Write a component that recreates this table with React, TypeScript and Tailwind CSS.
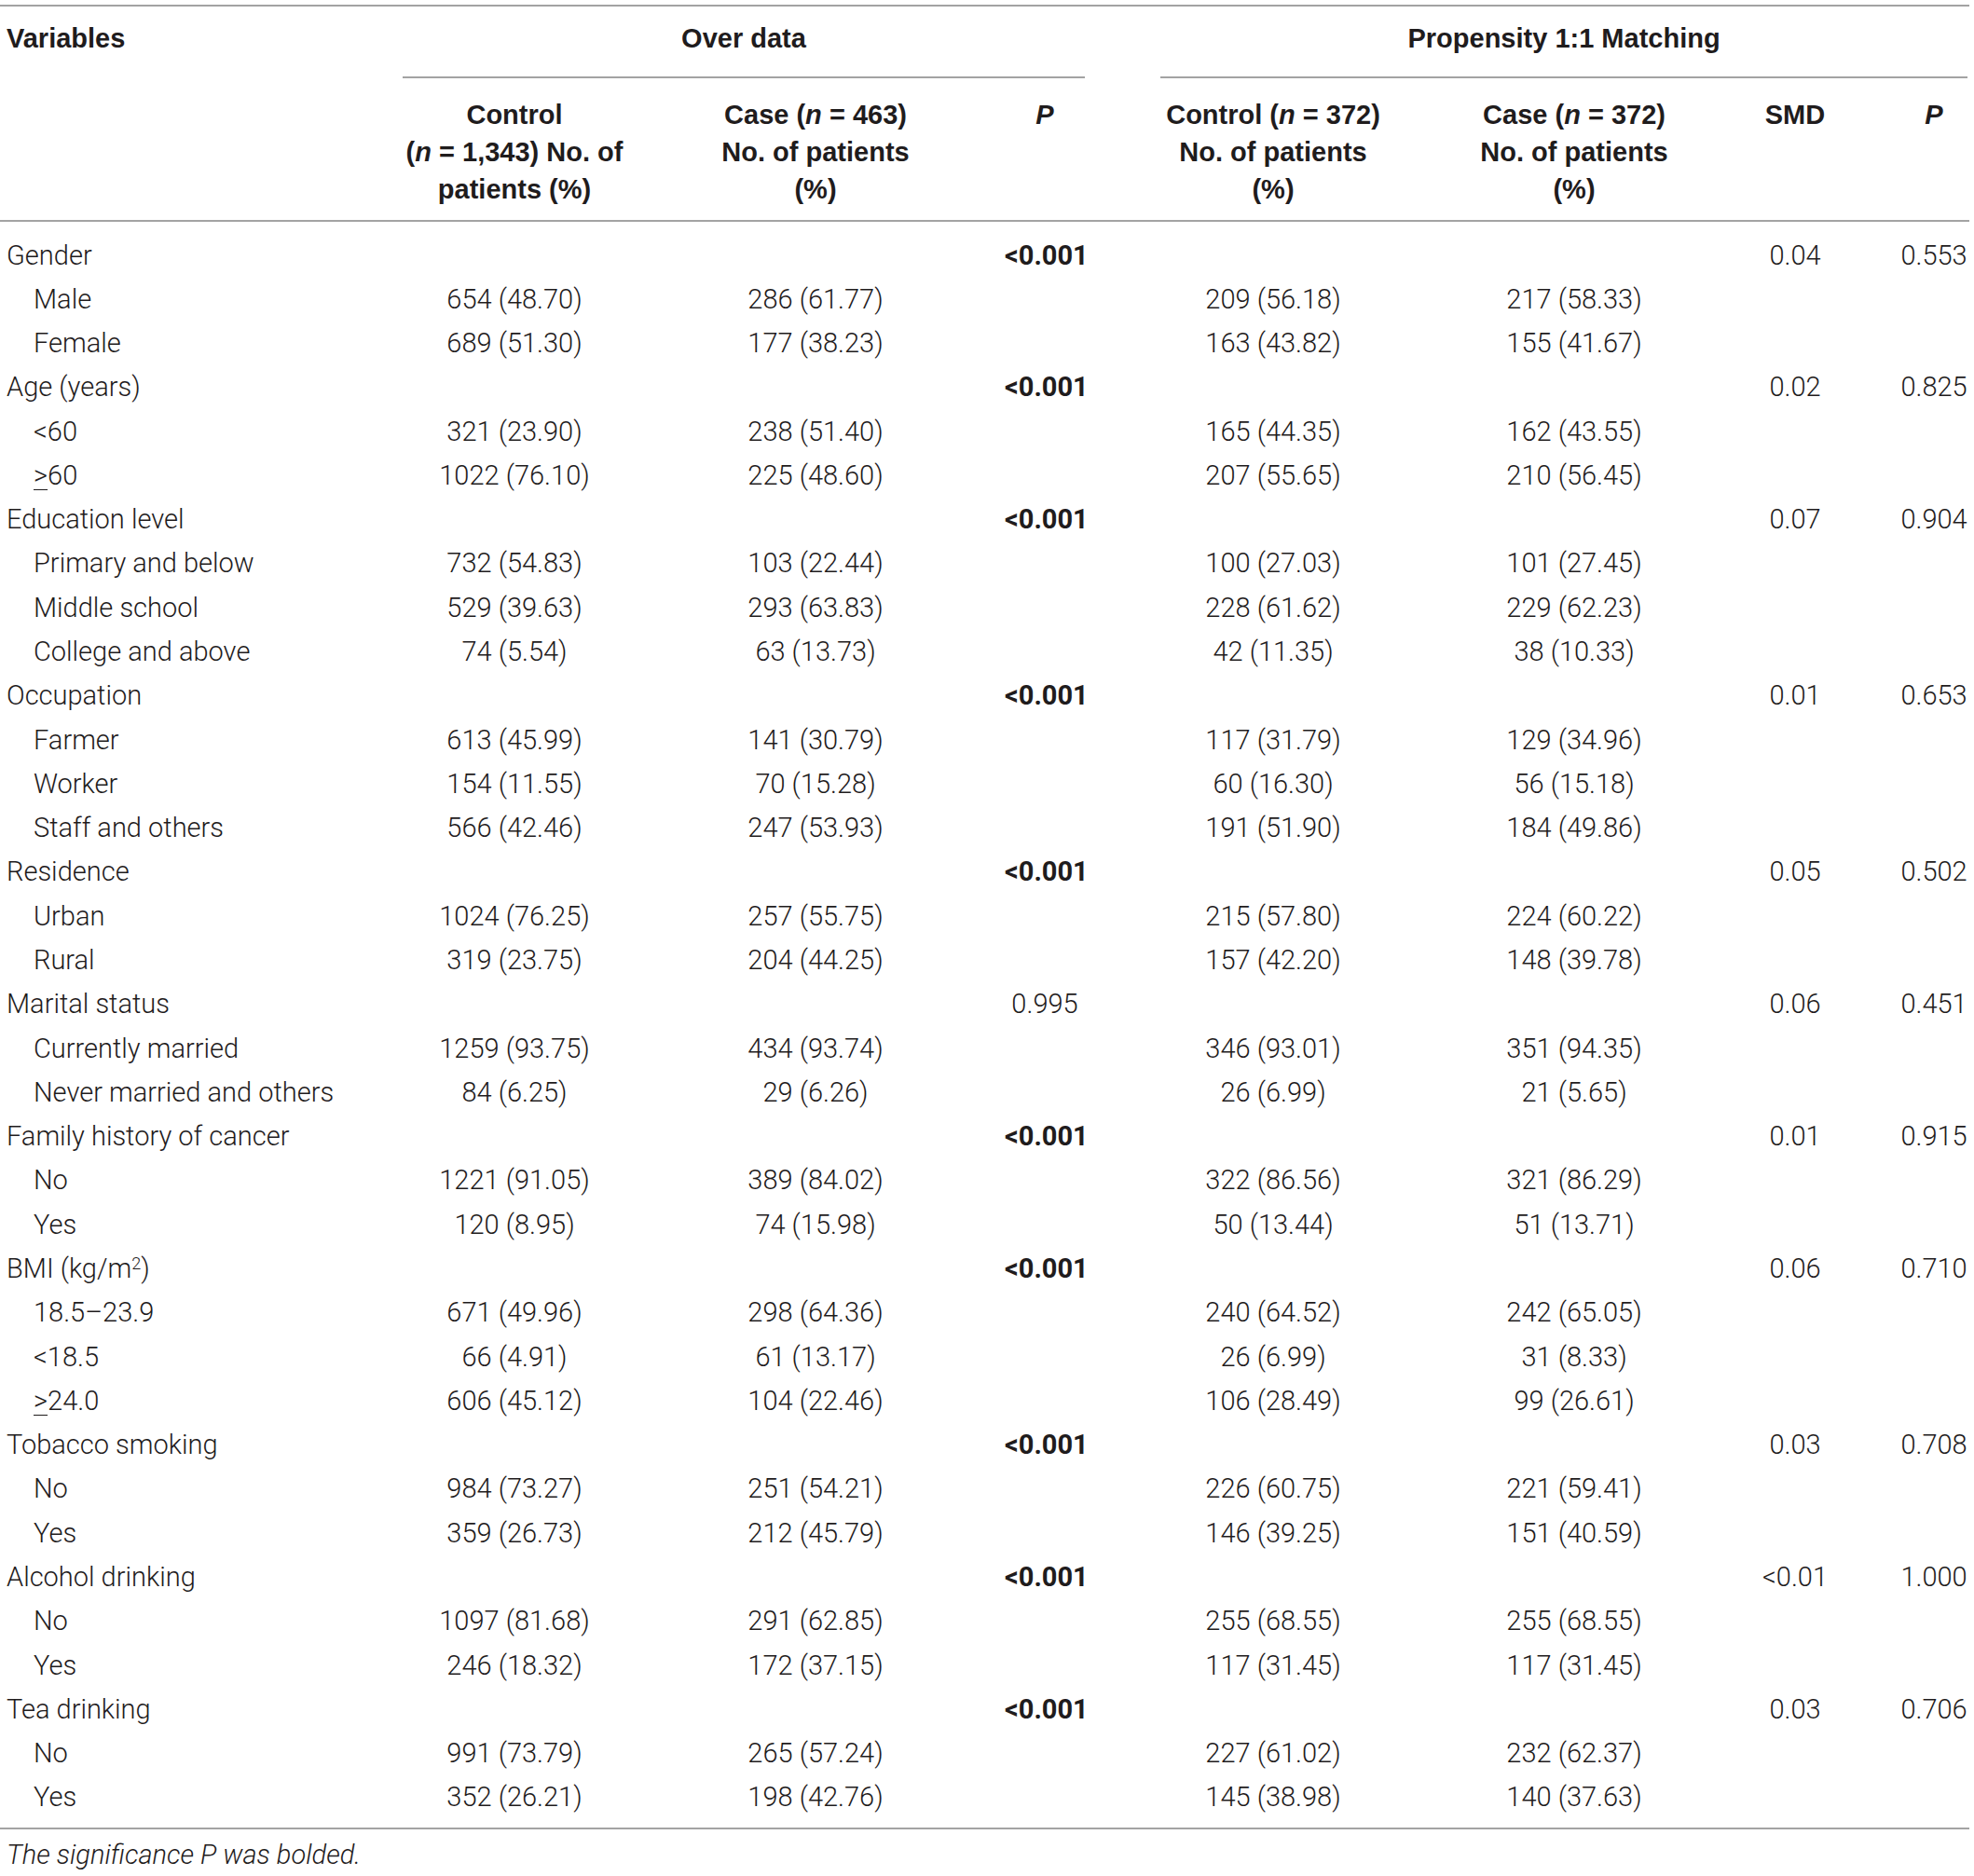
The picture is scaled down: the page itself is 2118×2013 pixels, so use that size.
import type { ReactNode } from 'react';

type Row = {
  label: ReactNode;
  sub?: boolean;
  c1?: string;
  c2?: string;
  p1?: string;
  bold?: boolean;
  m1?: string;
  m2?: string;
  smd?: string;
  p2?: string;
};

const ge = (v: string) => (
  <>
    <span className="underline decoration-1 underline-offset-[5px]">&gt;</span>
    {v}
  </>
);

const rows: Row[] = [
  { label: 'Gender', p1: '<0.001', bold: true, smd: '0.04', p2: '0.553' },
  { label: 'Male', sub: true, c1: '654 (48.70)', c2: '286 (61.77)', m1: '209 (56.18)', m2: '217 (58.33)' },
  { label: 'Female', sub: true, c1: '689 (51.30)', c2: '177 (38.23)', m1: '163 (43.82)', m2: '155 (41.67)' },
  { label: 'Age (years)', p1: '<0.001', bold: true, smd: '0.02', p2: '0.825' },
  { label: '<60', sub: true, c1: '321 (23.90)', c2: '238 (51.40)', m1: '165 (44.35)', m2: '162 (43.55)' },
  { label: ge('60'), sub: true, c1: '1022 (76.10)', c2: '225 (48.60)', m1: '207 (55.65)', m2: '210 (56.45)' },
  { label: 'Education level', p1: '<0.001', bold: true, smd: '0.07', p2: '0.904' },
  { label: 'Primary and below', sub: true, c1: '732 (54.83)', c2: '103 (22.44)', m1: '100 (27.03)', m2: '101 (27.45)' },
  { label: 'Middle school', sub: true, c1: '529 (39.63)', c2: '293 (63.83)', m1: '228 (61.62)', m2: '229 (62.23)' },
  { label: 'College and above', sub: true, c1: '74 (5.54)', c2: '63 (13.73)', m1: '42 (11.35)', m2: '38 (10.33)' },
  { label: 'Occupation', p1: '<0.001', bold: true, smd: '0.01', p2: '0.653' },
  { label: 'Farmer', sub: true, c1: '613 (45.99)', c2: '141 (30.79)', m1: '117 (31.79)', m2: '129 (34.96)' },
  { label: 'Worker', sub: true, c1: '154 (11.55)', c2: '70 (15.28)', m1: '60 (16.30)', m2: '56 (15.18)' },
  { label: 'Staff and others', sub: true, c1: '566 (42.46)', c2: '247 (53.93)', m1: '191 (51.90)', m2: '184 (49.86)' },
  { label: 'Residence', p1: '<0.001', bold: true, smd: '0.05', p2: '0.502' },
  { label: 'Urban', sub: true, c1: '1024 (76.25)', c2: '257 (55.75)', m1: '215 (57.80)', m2: '224 (60.22)' },
  { label: 'Rural', sub: true, c1: '319 (23.75)', c2: '204 (44.25)', m1: '157 (42.20)', m2: '148 (39.78)' },
  { label: 'Marital status', p1: '0.995', smd: '0.06', p2: '0.451' },
  { label: 'Currently married', sub: true, c1: '1259 (93.75)', c2: '434 (93.74)', m1: '346 (93.01)', m2: '351 (94.35)' },
  { label: 'Never married and others', sub: true, c1: '84 (6.25)', c2: '29 (6.26)', m1: '26 (6.99)', m2: '21 (5.65)' },
  { label: 'Family history of cancer', p1: '<0.001', bold: true, smd: '0.01', p2: '0.915' },
  { label: 'No', sub: true, c1: '1221 (91.05)', c2: '389 (84.02)', m1: '322 (86.56)', m2: '321 (86.29)' },
  { label: 'Yes', sub: true, c1: '120 (8.95)', c2: '74 (15.98)', m1: '50 (13.44)', m2: '51 (13.71)' },
  {
    label: (
      <>
        BMI (kg/m<sup className="text-[18px]">2</sup>)
      </>
    ),
    p1: '<0.001',
    bold: true,
    smd: '0.06',
    p2: '0.710',
  },
  { label: '18.5–23.9', sub: true, c1: '671 (49.96)', c2: '298 (64.36)', m1: '240 (64.52)', m2: '242 (65.05)' },
  { label: '<18.5', sub: true, c1: '66 (4.91)', c2: '61 (13.17)', m1: '26 (6.99)', m2: '31 (8.33)' },
  { label: ge('24.0'), sub: true, c1: '606 (45.12)', c2: '104 (22.46)', m1: '106 (28.49)', m2: '99 (26.61)' },
  { label: 'Tobacco smoking', p1: '<0.001', bold: true, smd: '0.03', p2: '0.708' },
  { label: 'No', sub: true, c1: '984 (73.27)', c2: '251 (54.21)', m1: '226 (60.75)', m2: '221 (59.41)' },
  { label: 'Yes', sub: true, c1: '359 (26.73)', c2: '212 (45.79)', m1: '146 (39.25)', m2: '151 (40.59)' },
  { label: 'Alcohol drinking', p1: '<0.001', bold: true, smd: '<0.01', p2: '1.000' },
  { label: 'No', sub: true, c1: '1097 (81.68)', c2: '291 (62.85)', m1: '255 (68.55)', m2: '255 (68.55)' },
  { label: 'Yes', sub: true, c1: '246 (18.32)', c2: '172 (37.15)', m1: '117 (31.45)', m2: '117 (31.45)' },
  { label: 'Tea drinking', p1: '<0.001', bold: true, smd: '0.03', p2: '0.706' },
  { label: 'No', sub: true, c1: '991 (73.79)', c2: '265 (57.24)', m1: '227 (61.02)', m2: '232 (62.37)' },
  { label: 'Yes', sub: true, c1: '352 (26.21)', c2: '198 (42.76)', m1: '145 (38.98)', m2: '140 (37.63)' },
];

// header cells use an Arial-width bold so the wider Helvetica headings line up
const headFont = { fontFamily: '"Liberation Sans", Arial, sans-serif' };

export default function App() {
  return (
    <div
      className="bg-white pt-[5px] text-[29px] font-light text-[#1f1c1d]"
      style={{ fontFamily: 'Roboto, "Liberation Sans", sans-serif' }}
    >
      <table className="w-[2113px] table-fixed border-t-2 border-[#a3a3a3]">
        <colgroup>
          <col className="w-[432px]" />
          <col className="w-[240px]" />
          <col className="w-[406px]" />
          <col className="w-[167px]" />
          <col className="w-[242px]" />
          <col className="w-[404px]" />
          <col className="w-[70px]" />
          <col className="w-[152px]" />
        </colgroup>
        <thead className="text-[29px] leading-[40px] font-bold" style={headFont}>
          <tr>
            <th className="pl-[7px] text-left align-top">
              <div className="flex h-[75px] items-center pb-[8px]">Variables</div>
            </th>
            <th colSpan={3} className="align-top">
              <div className="mr-[81px] flex h-[77px] items-center justify-center border-b-2 border-[#a3a3a3] pb-[8px]">
                Over data
              </div>
            </th>
            <th colSpan={4} className="align-top">
              <div className="mr-[2px] flex h-[77px] items-center justify-center border-b-2 border-[#a3a3a3] pb-[8px]">
                Propensity 1:1 Matching
              </div>
            </th>
          </tr>
          <tr className="border-b-2 border-[#a3a3a3]">
            <th className="pb-[13px]" />
            <th className="pt-[19px] pb-[13px] text-center align-top">
              Control
              <br />
              (<i>n</i> = 1,343) No. of
              <br />
              patients (%)
            </th>
            <th className="pt-[19px] pb-[13px] text-center align-top">
              Case (<i>n</i> = 463)
              <br />
              No. of patients
              <br />
              (%)
            </th>
            <th className="pt-[19px] pr-[81px] pb-[13px] text-center align-top">
              <i>P</i>
            </th>
            <th className="pt-[19px] pb-[13px] text-center align-top">
              Control (<i>n</i> = 372)
              <br />
              No. of patients
              <br />
              (%)
            </th>
            <th className="pt-[19px] pb-[13px] text-center align-top">
              Case (<i>n</i> = 372)
              <br />
              No. of patients
              <br />
              (%)
            </th>
            <th className="pt-[19px] pb-[13px] text-center align-top">SMD</th>
            <th className="pt-[19px] pb-[13px] pl-[76px] text-center align-top">
              <i>P</i>
            </th>
          </tr>
        </thead>
        <tbody className="border-b-2 border-[#a3a3a3] leading-[47.28px]">
          {rows.map((r, i) => {
            const pad = i === 0 ? 'pt-[12.5px]' : i === rows.length - 1 ? 'pb-[8px]' : '';
            return (
              <tr key={i}>
                <td className={`whitespace-nowrap text-left ${r.sub ? 'pl-[36px]' : 'pl-[7px]'} ${pad}`}>{r.label}</td>
                <td className={`text-center ${pad}`}>{r.c1}</td>
                <td className={`text-center ${pad}`}>{r.c2}</td>
                <td className={`pr-[81px] text-center ${r.bold ? 'font-bold' : ''} ${pad}`}>{r.p1}</td>
                <td className={`text-center ${pad}`}>{r.m1}</td>
                <td className={`text-center ${pad}`}>{r.m2}</td>
                <td className={`whitespace-nowrap text-center ${pad}`}>{r.smd}</td>
                <td className={`pl-[76px] text-center ${pad}`}>{r.p2}</td>
              </tr>
            );
          })}
        </tbody>
      </table>
      <p className="pt-[7px] pl-[7px] leading-[40px] italic">
        The significance <span>P</span> was bolded.
      </p>
    </div>
  );
}
